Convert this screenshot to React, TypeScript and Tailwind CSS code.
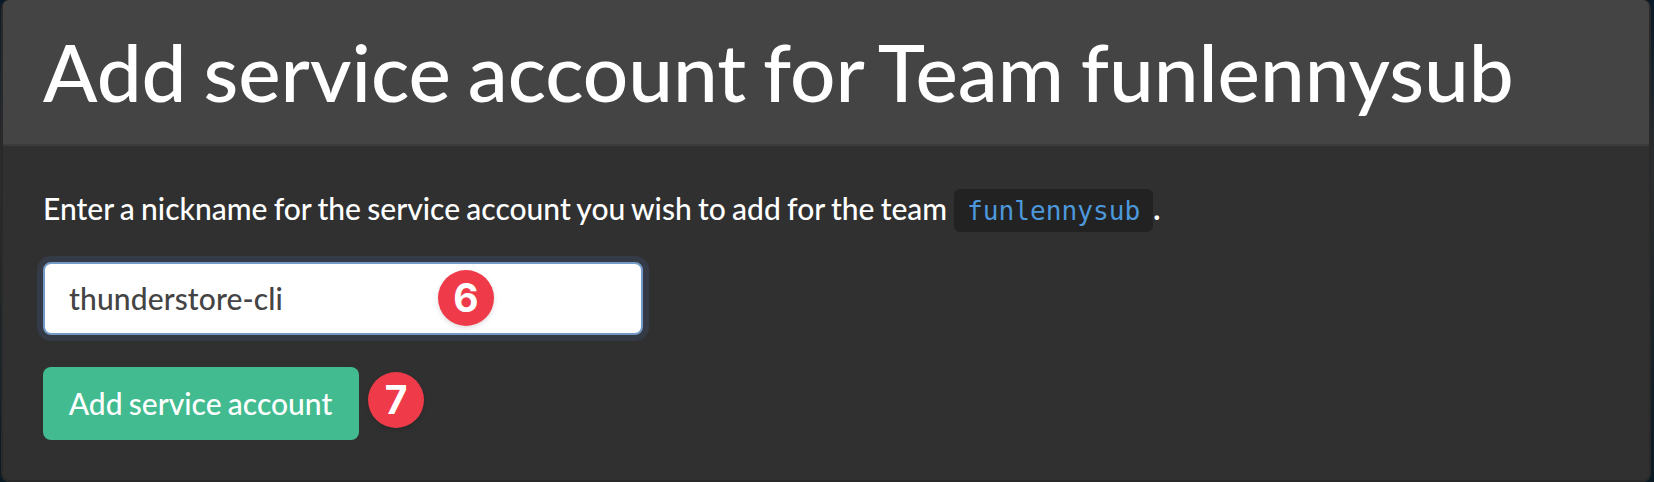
function Step({ n, place }: { n: number; place: string }) {
  return (
    <span
      className={`absolute flex size-[56px] items-center justify-center rounded-full bg-[#ef3b49] pb-[2px] font-['Inter',sans-serif] text-[39px] leading-none font-bold shadow-[0_2px_5px_rgba(0,0,0,0.14)] ${place}`}
    >
      {n}
    </span>
  );
}

export default function App() {
  return (
    <div className="flex h-[482px] w-full bg-linear-to-b from-[#0b1a28] via-[#2b2d2e] via-35% to-[#0b1a22] pr-[3px] pl-px font-['Lato',sans-serif] font-medium text-white [word-spacing:-1.3px]">
      <div className="flex w-full flex-col rounded-[8px] border-x-2 border-b-2 border-[#292929] bg-[#303030]">
        <header className="flex h-[146px] items-center rounded-t-[6px] border-b-2 border-[#3b3b3b] bg-[#444] px-[40px] pb-[2px]">
          <h1 className="text-[80px] leading-[96px] whitespace-nowrap [word-spacing:-3.3px]">Add service account for Team funlennysub</h1>
        </header>
        <main className="flex flex-col items-start px-[40px] pt-[43px]">
          <p className="flex h-[43px] items-center text-[30px] whitespace-nowrap">
            <span className="pb-[4px]">Enter a nickname for the service account you wish to add for the team</span>
            <code className="ml-[7px] flex h-[43px] w-[199px] items-center justify-center rounded-[6px] bg-[#222] pt-[2px] font-['DejaVu_Sans_Mono',monospace] text-[26.2px] font-normal text-[#4c98db]">
              funlennysub
            </code>
            <span className="pb-[4px] font-bold">.</span>
          </p>
          <div className="relative mt-[30px]">
            <input
              className="block h-[73px] w-[600px] rounded-[8px] border-2 border-[#7399c6] bg-white px-[24px] pb-px text-[30px] tracking-[0.12px] text-[#444] shadow-[0_0_0_6px_#343b46] outline-none"
              defaultValue="thunderstore-cli"
            />
            <Step n={6} place="top-[8px] left-[395px]" />
          </div>
          <div className="relative mt-[32px]">
            <button className="block h-[73px] w-[316px] rounded-[8px] bg-[#41bb8f] pr-px text-[30px] whitespace-nowrap [word-spacing:-1.3px]">Add service account</button>
            <Step n={7} place="top-[5px] left-[325px]" />
          </div>
        </main>
      </div>
    </div>
  );
}
